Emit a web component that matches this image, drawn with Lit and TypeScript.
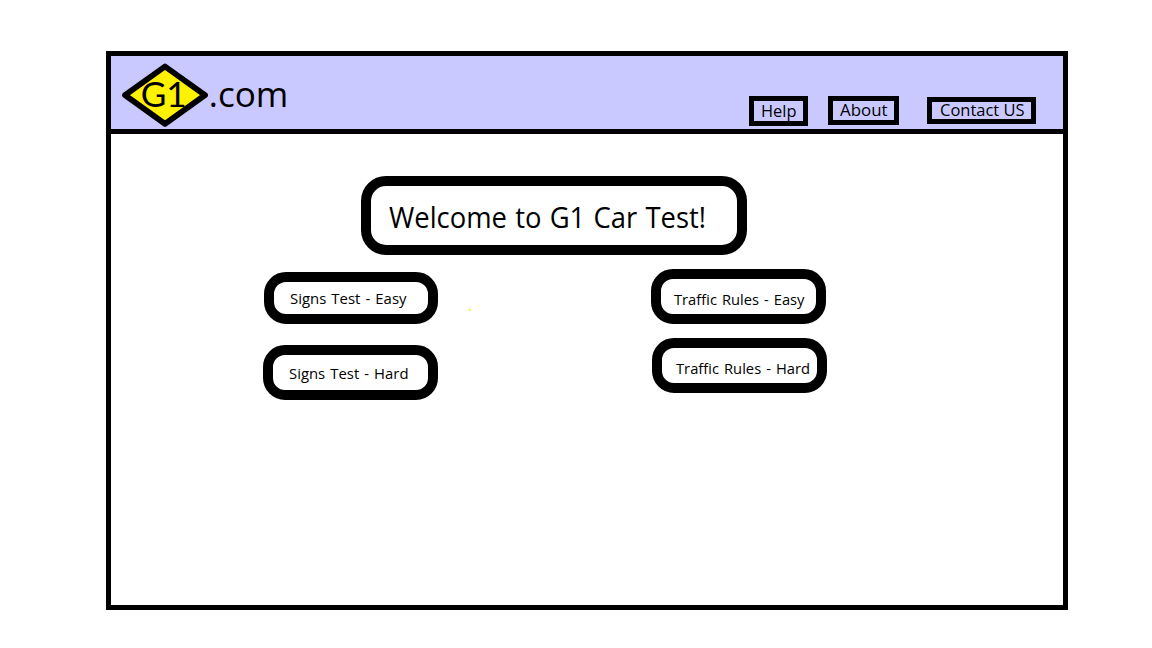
import { LitElement, html, css, svg } from "lit";
import { customElement, property } from "lit/decorators.js";

/** A single line of text fitted to a given run width. */
@customElement("fit-label")
class FitLabel extends LitElement {
  @property() text = "";
  @property({ type: Number }) run = 100;
  @property({ type: Number }) size = 16;

  static styles = css`
    :host { display: block; flex: none; }
    svg { display: block; overflow: visible; }
    text { fill: #000; }
  `;

  render() {
    return html`<svg width=${this.run} height=${this.size} role="presentation">
      ${svg`<text x="0" y=${this.size} font-size=${this.size} textLength=${this.run} lengthAdjust="spacingAndGlyphs">${this.text}</text>`}
    </svg>`;
  }
}

@customElement("app-root")
class AppRoot extends LitElement {
  static styles = css`
    :host {
      display: block;
      box-sizing: border-box;
      width: 1152px;
      height: 648px;
      padding: 51px 0 0 106px;
      background: #fff;
      overflow: hidden;
      color: #000;
      font-family: "Open Sans", "Noto Sans", sans-serif;
    }
    * { box-sizing: border-box; }
    .frame {
      width: 962px;
      height: 559px;
      border: 5px solid #000;
      display: flex;
      flex-direction: column;
    }
    header {
      height: 78px;
      flex: none;
      background: #c9c9ff;
      border-bottom: 5px solid #000;
      display: flex;
      justify-content: space-between;
    }
    .logo { display: block; margin: 6px 0 0 10px; }
    .mark { font-family: Lato, "Open Sans", sans-serif; }
    nav { display: flex; align-items: flex-start; padding: 40px 27px 0 0; }
    .link { border: 5px solid #000; display: flex; flex: none; }
    .help { width: 59px; height: 30px; padding: 0 0 0 6.5px; }
    .help fit-label { margin-top: -0.5px; }
    .about { width: 71px; height: 29px; margin-left: 20px; padding-left: 7px; }
    .about fit-label { margin-top: -1.5px; }
    .contact { width: 109px; height: 27px; margin: 1px 0 0 28px; padding-left: 7.5px; }
    .contact fit-label { margin-top: -2.5px; }
    main { display: flex; flex-direction: column; padding: 42px 0 0 152px; }
    .box { border: 10px solid #000; border-radius: 22px; display: flex; flex: none; word-spacing: 1.2px; }
    .title { width: 386px; height: 79px; margin-left: 98px; border-radius: 25px; padding: 13px 0 0 18px; }
    .grid { display: flex; align-items: flex-start; margin-top: 14px; }
    .col { display: flex; flex-direction: column; flex: none; }
    .signs { padding-top: 3px; width: 175px; }
    .dot { display: block; margin: 40px 180px 0 30px; flex: none; }
    .signs-easy { width: 174px; height: 52px; margin-left: 1px; padding: 7px 0 0 16px; }
    .signs-hard { width: 175px; height: 55px; margin-top: 21px; padding: 9px 0 0 15.5px; }
    .rules-easy { width: 175px; height: 55px; padding: 11px 0 0 12.5px; }
    .rules-hard { width: 175px; height: 55px; margin: 14px 0 0 1px; padding: 11px 0 0 13.5px; }
  `;

  render() {
    return html`
      <div class="frame">
        <header>
          <svg class="logo" width="180" height="66" viewBox="0 0 180 66">
            <path d="M4 33.2 44 4.5 84 33.2 44 61.8Z" fill="#fff200" stroke="#000" stroke-width="5.8" stroke-linejoin="round" />
            <text class="mark" x="19.7" y="44.7" font-size="34" textLength="46" lengthAdjust="spacingAndGlyphs">G1</text>
            <text x="87.7" y="44.9" font-size="34.5" textLength="79.7" lengthAdjust="spacingAndGlyphs">.com</text>
          </svg>
          <nav>
            <div class="link help"><fit-label text="Help" run="35.5" size="16"></fit-label></div>
            <div class="link about"><fit-label text="About" run="47.5" size="16"></fit-label></div>
            <div class="link contact"><fit-label text="Contact US" run="84.5" size="16"></fit-label></div>
          </nav>
        </header>
        <main>
          <div class="box title"><fit-label text="Welcome to G1 Car Test!" run="317" size="28.7"></fit-label></div>
          <div class="grid">
            <div class="col signs">
              <div class="box signs-easy"><fit-label text="Signs Test - Easy" run="116.5" size="15"></fit-label></div>
              <div class="box signs-hard"><fit-label text="Signs Test - Hard" run="119.5" size="15"></fit-label></div>
            </div>
            <svg class="dot" width="3" height="3"><path d="M1 0H3V1H2V2H1Z" fill="#fff200" /></svg>
            <div class="col">
              <div class="box rules-easy"><fit-label text="Traffic Rules - Easy" run="130.5" size="15"></fit-label></div>
              <div class="box rules-hard"><fit-label text="Traffic Rules - Hard" run="134" size="15"></fit-label></div>
            </div>
          </div>
        </main>
      </div>
    `;
  }
}
